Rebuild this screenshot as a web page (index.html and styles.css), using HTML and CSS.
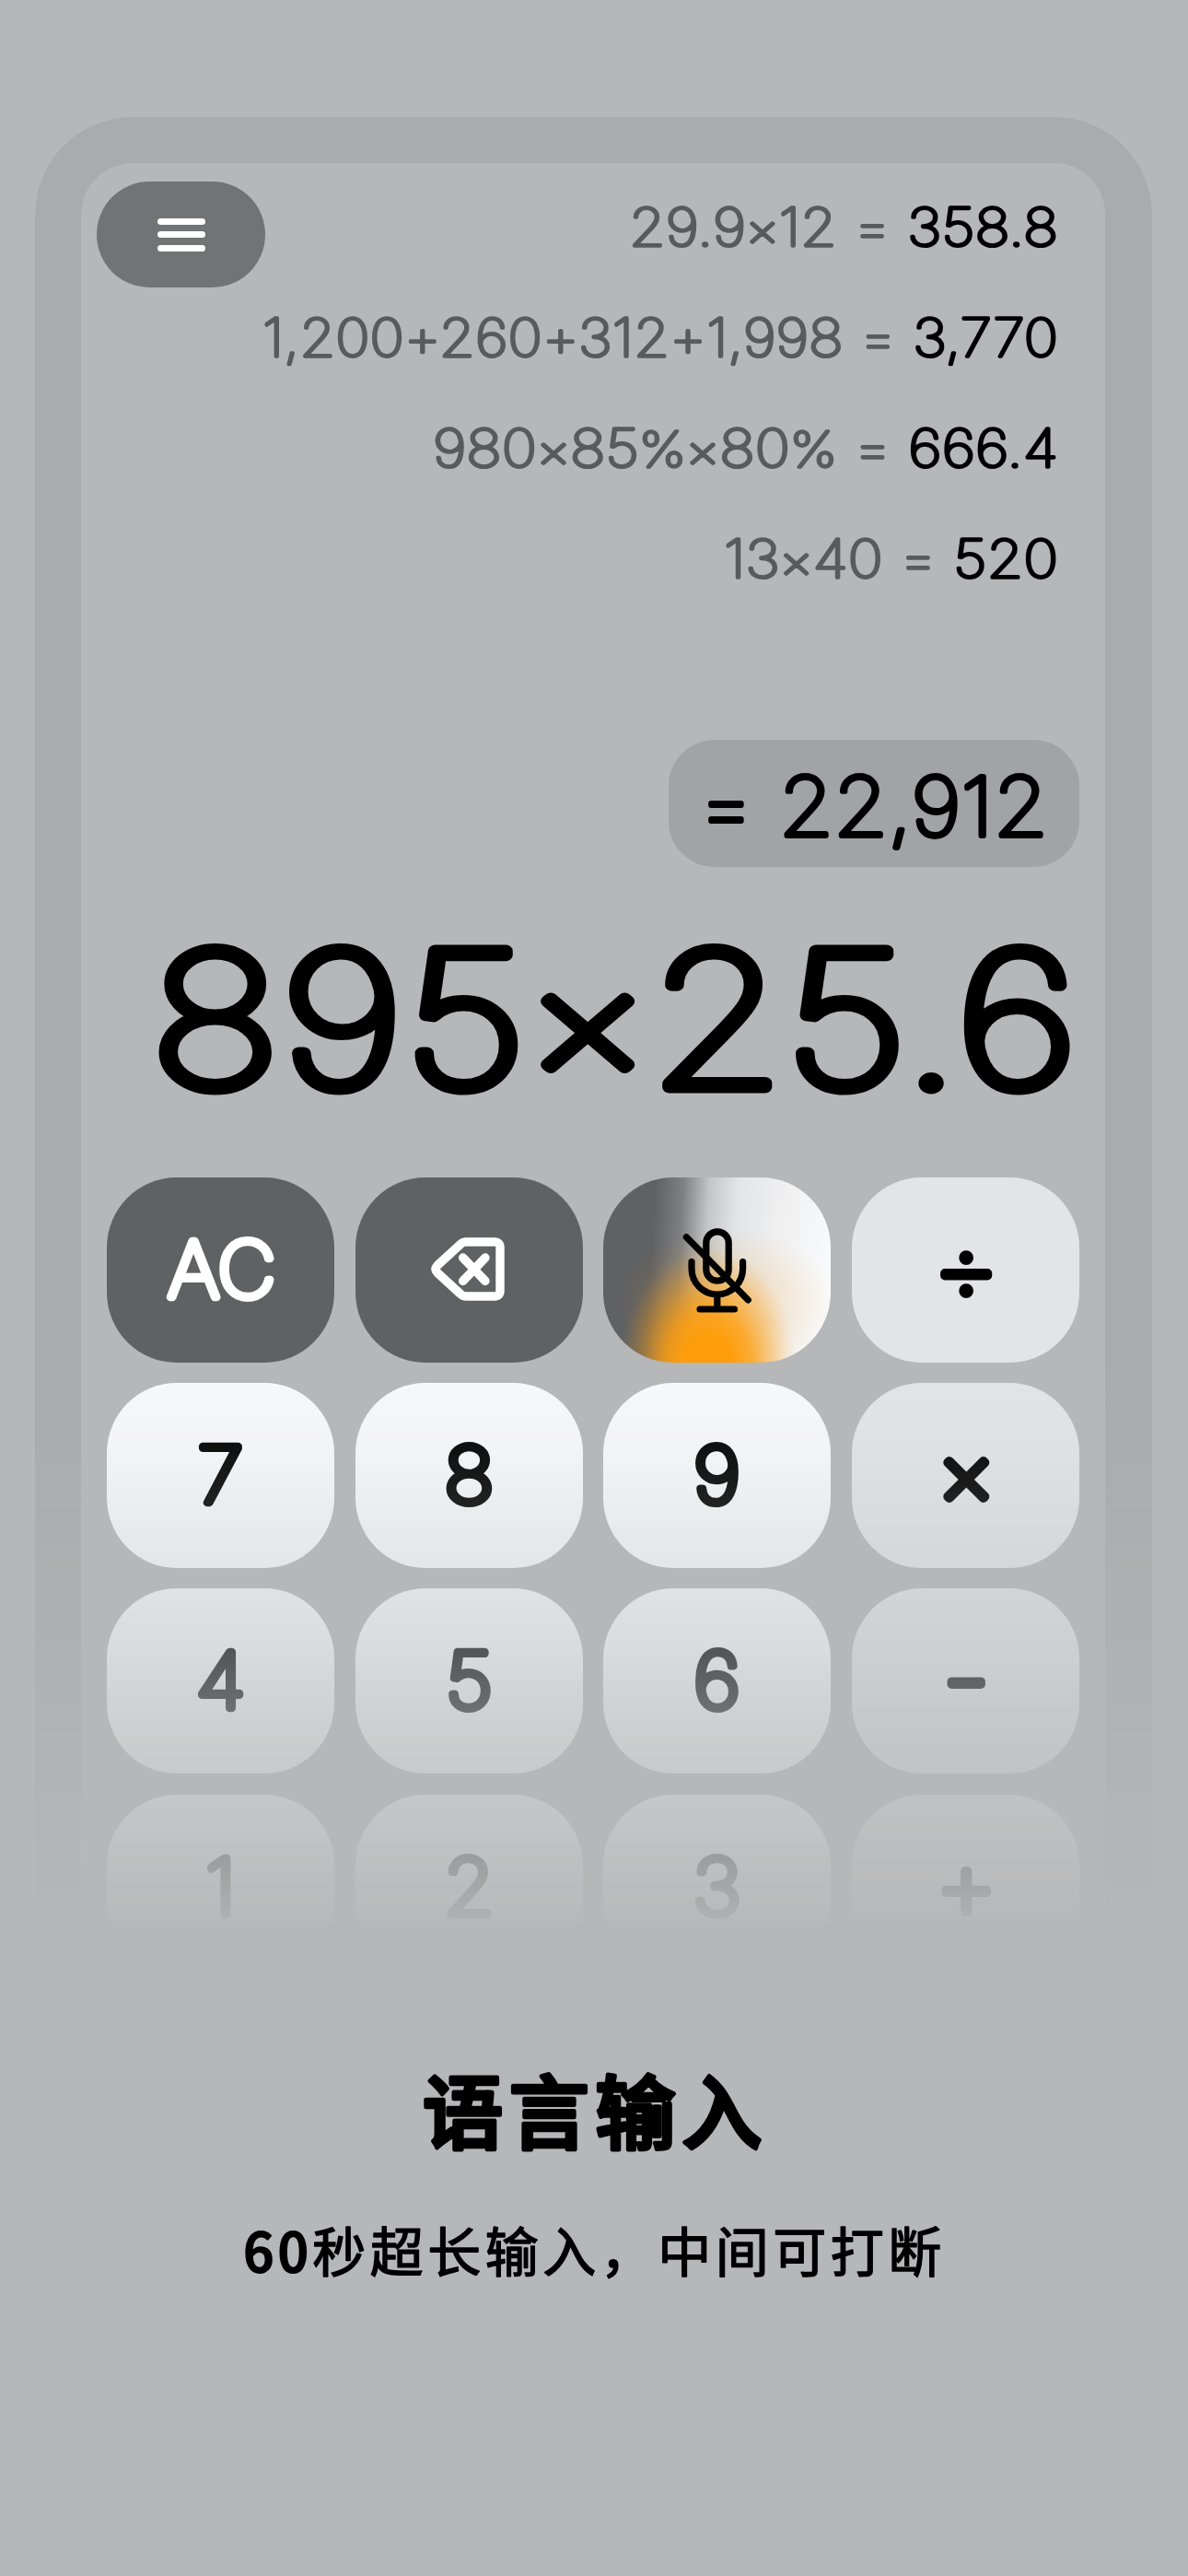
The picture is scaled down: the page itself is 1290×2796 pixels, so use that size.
FILE: index.html
```html
<!DOCTYPE html>
<html lang="zh-CN">
<head>
<meta charset="utf-8">
<title>语言输入</title>
<link rel="stylesheet" href="styles.css">
</head>
<body>
<main class="page">
  <section class="phone">
    <div class="top">
      <button class="menu" aria-label="菜单"><span class="bar"></span><span class="bar"></span><span class="bar"></span></button>
      <div class="history">
        <svg class="line"><text x="100%" y="80" textLength="466" lengthAdjust="spacingAndGlyphs"><tspan class="expr">29.9<tspan class="mul">×</tspan>12 = </tspan>358.8</text></svg>
        <svg class="line"><text x="100%" y="80" textLength="864" lengthAdjust="spacingAndGlyphs"><tspan class="expr">1,200+260+312+1,998 = </tspan>3,770</text></svg>
        <svg class="line"><text x="100%" y="80" textLength="679" lengthAdjust="spacingAndGlyphs"><tspan class="expr">980<tspan class="mul">×</tspan>85<tspan class="pct">%</tspan><tspan class="mul">×</tspan>80<tspan class="pct">%</tspan> = </tspan>666.4</text></svg>
        <svg class="line"><text x="100%" y="80" textLength="363" lengthAdjust="spacingAndGlyphs"><tspan class="expr">13<tspan class="mul">×</tspan>40 = </tspan>520</text></svg>
      </div>
    </div>
    <div class="result"><svg class="fill"><text x="100%" y="104" textLength="380" lengthAdjust="spacingAndGlyphs">= 22,912</text></svg></div>
    <div class="entry"><svg class="fill"><text x="100%" y="193.500" textLength="1008" lengthAdjust="spacingAndGlyphs">895<tspan class="mul" dy="-8">×</tspan><tspan dy="8">25.6</tspan></text></svg></div>
    <div class="keys">
      <button class="key dark"><svg class="fill"><text x="50.500%" y="130" textLength="117" lengthAdjust="spacingAndGlyphs">AC</text></svg></button>
      <button class="key dark" aria-label="退格">
        <svg class="icon-del" viewBox="0 0 90 80"><path d="M42 10H73Q79 10 79 16V63Q79 69 73 69H42Q38.5 69 36 66.500L11 43.500Q7.200 39.500 11 35.500L36 12.500Q38.500 10 42 10Z"/><path d="M38.700 27.100L62.900 52.400M62.900 27.100L38.700 52.400"/></svg>
      </button>
      <button class="key voice" aria-label="语音">
        <svg class="icon-mic" viewBox="0 0 80 105"><rect x="27.800" y="10.800" width="24.400" height="53.400" rx="12.200"/><path d="M12 43.500V51A27.800 28 0 0 0 67.600 51V43.500M39.800 79V95M21 95H58.500M6.300 16.700L73.300 85"/></svg>
      </button>
      <button class="key op"><svg class="fill divide"><text x="50.300%" y="137">÷</text></svg></button>
      <button class="key"><svg class="fill digit"><text x="50%" y="130">7</text></svg></button>
      <button class="key"><svg class="fill digit"><text x="50%" y="130">8</text></svg></button>
      <button class="key"><svg class="fill digit"><text x="50%" y="130">9</text></svg></button>
      <button class="key op"><svg class="fill times"><text x="50.300%" y="132">×</text></svg></button>
      <button class="key"><svg class="fill digit"><text x="50%" y="130">4</text></svg></button>
      <button class="key"><svg class="fill digit"><text x="50%" y="130">5</text></svg></button>
      <button class="key"><svg class="fill digit"><text x="50%" y="130">6</text></svg></button>
      <button class="key op"><svg class="fill minus"><text x="50.300%" y="139">-</text></svg></button>
      <button class="key"><svg class="fill digit"><text x="50%" y="130">1</text></svg></button>
      <button class="key"><svg class="fill digit"><text x="50%" y="130">2</text></svg></button>
      <button class="key"><svg class="fill digit"><text x="50%" y="130">3</text></svg></button>
      <button class="key op"><svg class="fill plus"><text x="50.300%" y="135">+</text></svg></button>
    </div>
  </section>
  <h1 class="title"><svg class="fill"><text x="50%" y="103">语言输入</text></svg></h1>
  <p class="sub"><svg class="fill"><text x="50%" y="71.500"><tspan class="num">60</tspan>秒超长输入，中间可打断</text></svg></p>
</main>
</body>
</html>
```
FILE: styles.css
```css
* { box-sizing: border-box; margin: 0; padding: 0; }
body { background: #b5b7b9; color: #000; font-family: Inter, "Liberation Sans", sans-serif; }
.page { width: 1290px; height: 2796px; overflow: hidden; padding-top: 127px; }
svg { display: block; overflow: visible; }
text {
  fill: currentColor; stroke: currentColor; stroke-linejoin: round; stroke-linecap: round;
  font-weight: 100; font-feature-settings: "calt" 0; white-space: pre;
}
.fill { width: 100%; height: 100%; }
.phone {
  width: 1213px; height: 1965px; margin-left: 38px; overflow: hidden;
  border: solid #aaabad; border-width: 50px 51px 0 50px; border-radius: 106px 106px 0 0;
  -webkit-mask-image: linear-gradient(#000 1351px, rgba(0,0,0,.92) 1439px, rgba(0,0,0,.81) 1508px, rgba(0,0,0,.54) 1663px, rgba(0,0,0,.39) 1731px, rgba(0,0,0,.145) 1886px, rgba(0,0,0,.035) 1953px, transparent 1965px);
  mask-image: linear-gradient(#000 1351px, rgba(0,0,0,.92) 1439px, rgba(0,0,0,.81) 1508px, rgba(0,0,0,.54) 1663px, rgba(0,0,0,.39) 1731px, rgba(0,0,0,.145) 1886px, rgba(0,0,0,.035) 1953px, transparent 1965px);
}
.top { display: flex; padding: 10px 51px 0 17px; }
.menu {
  display: flex; flex-direction: column; justify-content: center; align-items: center; gap: 7.500px;
  flex: none; width: 183px; height: 115px; margin-top: 10px; border: 0; border-radius: 58px; background: #727375;
}
.bar { width: 52px; height: 7px; border-radius: 3.500px; background: #fff; }
.history { flex: 1; font-size: 57px; }
.line { width: 100%; height: 120px; text-anchor: end; stroke-width: 3.600px; }
.expr { fill: #585a5b; stroke: #585a5b; }
.mul { font-size: 88%; }
.pct { font-size: 94%; }
.result {
  width: 446px; height: 138px; margin: 136px 28px 0 auto; padding-right: 34px; border-radius: 50px; background: #a2a3a5;
  font-size: 88.500px; text-anchor: end; stroke-width: 5.800px;
}
.entry { height: 240px; margin-top: 45px; padding-right: 29px; font-size: 203px; text-anchor: end; stroke-width: 13px; }
.keys { display: grid; grid-template-columns: repeat(4, 247px); grid-auto-rows: 200.500px; gap: 22.700px; margin: 52px 28px 0; }
.key {
  display: flex; align-items: center; justify-content: center; border: 0; border-radius: 76px; background: #f8f9fb;
  color: #000; font: 83.500px Inter, "Liberation Sans", sans-serif; text-anchor: middle; stroke-width: 8.300px;
}
.key.dark { background: #606163; color: #fff; }
.key.op { background: #e3e4e6; stroke-width: 10px; }
.digit { transform: scaleX(1.08); }
.divide { font-size: 112px; }
.times { font-size: 96px; }
.minus { font-size: 116px; }
.plus { font-size: 106px; }
.key.voice {
  background:
    radial-gradient(ellipse 39% 66% at 46% 104%, #ff9d0a 0, #ff9d0a 28%, rgba(255,157,10,.8) 50%, rgba(255,157,10,.4) 72%, rgba(255,157,10,.12) 90%, rgba(255,157,10,0) 100%),
    radial-gradient(ellipse 48% 40% at 54% 68%, rgba(255,157,10,.24) 0, rgba(255,157,10,.14) 45%, rgba(255,157,10,0) 100%),
    linear-gradient(93deg, #606163 22%, #7f8082 34%, #c4c5c7 45%, #e3e4e6 57%, #efeff0 75%, #f9fafb 98%);
}
.icon-del { width: 90px; height: 80px; fill: none; stroke: #fff; stroke-width: 9.500; stroke-linecap: round; }
.icon-mic { width: 80px; height: 105px; fill: none; stroke: #000; stroke-width: 7.200; stroke-linecap: round; }
.title, .sub { font-family: "Noto Sans CJK SC", sans-serif; text-anchor: middle; }
.title { height: 130px; margin-top: 131px; padding-left: 3px; font-size: 87px; letter-spacing: 6.700px; stroke-width: 4.600px; }
.title text { font-weight: 500; }
.sub { height: 90px; margin-top: 41px; padding-left: 1px; font-size: 58px; letter-spacing: 4.500px; stroke-width: 1.500px; }
.sub text { font-weight: 400; }
.num { font-weight: 500; stroke-width: 2px; }
```
